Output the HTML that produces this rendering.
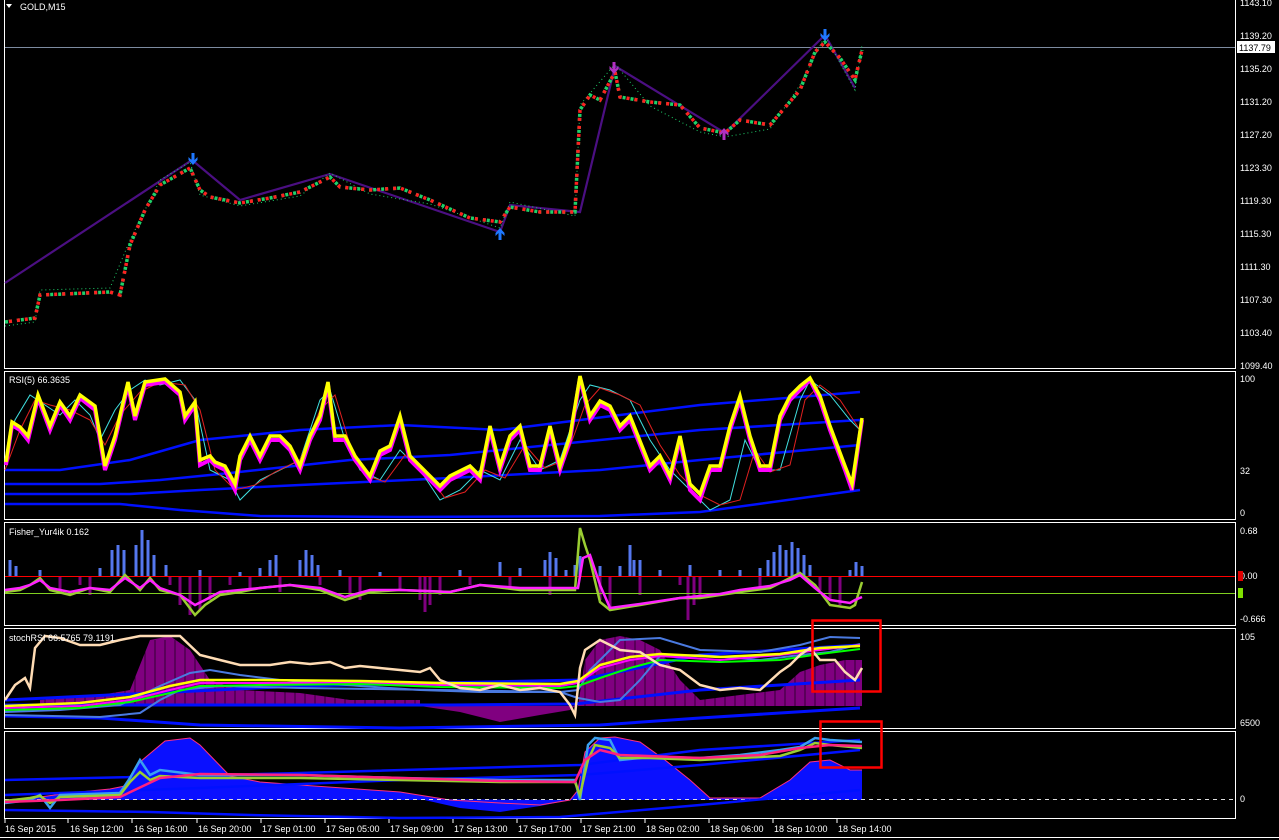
<!DOCTYPE html>
<html><head><meta charset="utf-8"><style>
html,body{margin:0;padding:0;background:#000;}
svg{display:block;font-family:"Liberation Sans",sans-serif;}
</style></head><body>
<svg width="1279" height="840" viewBox="0 0 1279 840" xmlns="http://www.w3.org/2000/svg">
<defs>
<path id="dn" d="M-1.5,-12 h3 v7 l3,-3 v3 l-4.5,5 l-4.5,-5 v-3 l3,3 z"/>
</defs>
<rect width="1279" height="840" fill="#000"/>
<!-- frames -->
<g fill="none" stroke="#fff" stroke-width="1">
<rect x="4.5" y="-1" width="1231" height="369.5"/>
<rect x="4.5" y="371.5" width="1231" height="148"/>
<rect x="4.5" y="522.5" width="1231" height="103"/>
<rect x="4.5" y="628.5" width="1231" height="100"/>
<rect x="4.5" y="731.5" width="1231" height="87"/>
</g>
<!-- main chart -->
<text x="20" y="10" fill="#fff" font-size="9">GOLD,M15</text>
<path d="M6 4 L12 4 L9 8 Z" fill="#fff"/>
<line x1="5" y1="47.5" x2="1235" y2="47.5" stroke="#7d8ba0"/>
<polyline fill="none" stroke="#4b0f82" stroke-width="2.2" points="5,283 192,160 240,200 330,174 500,232 510,205 580,212 615,66 725,133 825,35 855,88"/>
<polyline fill="none" stroke="#1fd16a" stroke-width="1" points="5,326 35,322 40,290 110,288 130,240 160,180 190,162 200,195 240,206 300,196 330,173 370,194 430,204 500,228 510,202 575,216 580,105 615,64 650,106 700,132 725,137 770,129 800,85 825,36 855,90 862,45" stroke-dasharray="1 3"/>
<polyline fill="none" stroke="#1fd16a" stroke-width="3.5" stroke-dasharray="3 1 3 5" points="5,322 35,318 40,295 110,292 120,295 130,245 145,210 160,185 190,168 200,190 210,197 240,203 270,198 300,192 330,177 340,187 370,190 400,188 430,200 470,218 500,222 510,207 540,212 575,212 580,110 590,95 600,100 615,72 620,97 650,102 680,105 700,128 725,133 740,120 770,125 800,90 815,52 825,42 840,58 855,80 862,50"/>
<polyline fill="none" stroke="#ff2020" stroke-width="3.5" stroke-dasharray="3 5" stroke-dashoffset="-4" points="5,322 35,318 40,295 110,292 120,295 130,245 145,210 160,185 190,168 200,190 210,197 240,203 270,198 300,192 330,177 340,187 370,190 400,188 430,200 470,218 500,222 510,207 540,212 575,212 580,110 590,95 600,100 615,72 620,97 650,102 680,105 700,128 725,133 740,120 770,125 800,90 815,52 825,42 840,58 855,80 862,50"/>
<use href="#dn" x="193" y="165" fill="#1e78ff"/>
<use href="#dn" transform="translate(500,228) rotate(180)" fill="#1e78ff"/>
<use href="#dn" x="614" y="74" fill="#b030c0"/>
<use href="#dn" transform="translate(724,128) rotate(180)" fill="#b030c0"/>
<use href="#dn" x="825" y="41" fill="#1e78ff"/>
<g fill="#fff" font-size="9">
<text x="1240" y="6">1143.10</text><text x="1240" y="39">1139.20</text>
<text x="1240" y="72">1135.20</text><text x="1240" y="105">1131.20</text>
<text x="1240" y="138">1127.20</text><text x="1240" y="171">1123.30</text>
<text x="1240" y="204">1119.30</text><text x="1240" y="237">1115.30</text>
<text x="1240" y="270">1111.30</text><text x="1240" y="303">1107.30</text>
<text x="1240" y="336">1103.40</text><text x="1240" y="369">1099.40</text>
</g>
<rect x="1237" y="41" width="38" height="12" fill="#fff"/>
<text x="1239" y="51" fill="#000" font-size="9">1137.79</text>
<!-- RSI -->
<text x="9" y="383" fill="#fff" font-size="9">RSI(5) 66.3635</text>
<g fill="#fff" font-size="9"><text x="1240" y="382">100</text><text x="1240" y="474">32</text><text x="1240" y="516">0</text></g>
<g fill="none" stroke="#0010ff" stroke-width="2.5">
<polyline points="5,484 100,484 160,480 230,473 350,460 450,455 600,440 700,430 860,420"/>
<polyline points="5,494 130,494 200,490 300,485 450,478 600,470 700,460 860,445"/>
<polyline points="5,504 120,504 180,510 260,516 400,517 600,516 700,512 860,490"/>
<polyline points="5,470 60,470 130,460 200,440 300,430 400,425 500,430 580,420 700,405 860,392"/>
</g>
<polyline fill="none" stroke="#40e0e0" stroke-width="1" points="5,460 15,420 30,395 45,405 60,415 75,400 90,415 100,440 115,410 130,390 145,380 160,385 180,380 195,400 210,470 230,480 240,500 260,480 280,470 300,460 320,400 330,390 345,440 360,470 380,480 400,450 420,470 440,500 460,490 480,470 500,480 520,440 540,470 560,460 580,400 590,385 610,390 630,400 650,440 670,470 690,490 710,510 730,500 745,440 760,470 780,470 800,400 810,380 830,395 850,420 860,430"/>
<polyline fill="none" stroke="#e02020" stroke-width="1" points="5,470 20,430 35,400 50,405 70,410 90,420 105,445 120,415 140,392 160,382 185,385 200,410 215,470 235,490 255,485 275,472 300,460 320,410 335,395 350,445 365,475 385,482 405,455 425,472 445,498 465,492 485,470 505,478 525,445 545,468 565,460 585,405 600,388 620,395 640,405 660,445 680,475 700,495 720,505 740,500 755,450 770,472 790,465 805,400 820,385 840,400 860,430"/>
<polyline fill="none" stroke="#ff00ff" stroke-width="4" points="6,465 12,425 20,430 28,440 38,398 50,430 60,405 70,420 80,398 95,410 105,470 115,440 128,385 135,420 145,385 165,382 180,395 185,420 195,405 200,465 210,460 215,465 225,470 235,490 240,460 250,440 260,460 270,440 280,440 290,450 300,470 310,440 320,420 328,385 335,440 345,440 355,460 370,480 380,455 390,450 400,420 410,460 420,470 430,480 440,490 450,480 470,470 480,480 490,430 500,470 510,440 520,430 530,470 540,470 550,430 560,470 570,440 580,378 590,420 600,405 610,410 620,430 630,420 650,470 660,460 670,480 680,440 690,490 700,500 710,470 720,470 730,430 740,400 750,440 760,470 770,470 780,420 790,400 800,390 810,380 820,400 830,430 845,470 852,490 862,420"/>
<polyline fill="none" stroke="#ffff00" stroke-width="3.5" points="6,462 12,422 20,427 28,436 38,395 50,426 60,402 70,416 80,395 95,406 105,466 115,436 128,382 135,416 145,382 165,379 180,392 185,416 195,402 200,460 210,456 215,462 225,466 235,484 240,456 250,436 260,456 270,436 280,436 290,446 300,466 310,436 320,416 328,382 335,436 345,436 355,456 370,476 380,451 390,446 400,416 410,456 420,466 430,476 440,486 450,476 470,466 480,476 490,426 500,466 510,436 520,426 530,466 540,466 550,426 560,466 570,436 580,376 590,416 600,401 610,406 620,426 630,416 650,466 660,456 670,476 680,436 690,484 700,494 710,466 720,466 730,426 740,396 750,436 760,466 770,466 780,416 790,396 800,386 810,378 820,396 830,426 845,466 852,484 862,418"/>
<!-- Fisher -->
<text x="9" y="535" fill="#fff" font-size="9">Fisher_Yur4ik 0.162</text>
<g fill="#fff" font-size="9"><text x="1240" y="534">0.68</text><text x="1240" y="579">0.00</text><text x="1240" y="622">-0.666</text></g>
<rect x="1238" y="571" width="5" height="10" fill="#e00000"/><rect x="1238" y="588" width="5" height="10" fill="#80e000"/>
<g stroke="#5577ee" stroke-width="3">
<path d="M10 576V560M16 576V566M40 576V570M100 576V568M112 576V550M118 576V545M124 576V550M136 576V545M142 576V530M148 576V540M154 576V555M166 576V565M200 576V570M240 576V572M260 576V568M270 576V560M276 576V555M300 576V560M306 576V550M312 576V555M318 576V565M340 576V570M380 576V572M460 576V570M500 576V562M520 576V568M545 576V560M550 576V552M556 576V558M566 576V570M575 576V565M580 576V556M600 576V566M620 576V566M630 576V545M634 576V560M640 576V560M660 576V570M690 576V565M720 576V570M740 576V570M760 576V568M768 576V560M774 576V552M780 576V545M786 576V550M792 576V542M798 576V548M804 576V555M810 576V565M850 576V570M856 576V562M862 576V566"/>
</g>
<g stroke="#800080" stroke-width="3">
<path d="M60 576V590M80 576V585M90 576V595M170 576V585M180 576V605M190 576V615M200 576V610M210 576V600M230 576V585M250 576V590M280 576V592M320 576V585M350 576V595M360 576V600M400 576V590M420 576V600M425 576V612M430 576V605M440 576V595M470 576V585M510 576V590M550 576V595M600 576V600M610 576V608M640 576V595M680 576V585M688 576V620M694 576V605M700 576V595M760 576V590M820 576V590M830 576V600M840 576V605"/>
</g>
<line x1="5" y1="576.5" x2="1235" y2="576.5" stroke="#ff0000"/>
<line x1="5" y1="593.5" x2="1235" y2="593.5" stroke="#80d020"/>
<polyline fill="none" stroke="#9acd32" stroke-width="2.5" points="5,592 20,590 30,585 40,578 50,590 70,595 90,588 110,592 125,575 140,590 150,578 160,590 180,595 195,615 205,605 220,595 240,592 260,588 290,585 320,590 345,600 370,592 400,590 450,592 480,585 520,590 560,590 575,590 580,528 585,545 590,560 600,602 610,610 640,605 680,598 700,598 720,595 740,592 770,588 790,578 800,573 815,585 830,605 850,608 855,605 862,582"/>
<polyline fill="none" stroke="#ff22ff" stroke-width="2.5" points="5,590 20,588 30,585 40,580 50,588 70,592 90,588 110,590 125,578 140,588 150,580 160,588 180,595 195,605 205,600 220,592 240,590 260,588 290,585 320,588 345,597 370,590 400,590 450,592 480,585 520,588 560,588 578,588 583,558 590,555 600,585 610,608 640,604 680,598 700,596 720,594 740,590 770,586 790,580 800,575 815,588 830,600 850,603 855,600 862,597"/>
<!-- stochRSI -->
<g fill="#800080">
<path d="M40,706 L40,700 100,695 130,690 150,640 170,636 190,650 210,680 240,690 300,693 350,700 420,700 420,706 Z"/>
<path d="M420,706 L460,712 500,722 540,715 570,710 575,706 Z"/>
<path d="M578,706 L585,660 600,640 620,636 640,640 660,650 680,680 700,700 740,695 780,690 800,672 820,665 845,660 862,660 862,706 Z"/>
</g>
<g stroke="#000" stroke-width="1" opacity="0.6"><path d="M45 640V706M55 640V706M65 640V706M75 640V706M85 640V706M95 640V706M105 640V706M115 640V706M125 640V706M135 640V706M145 640V706M155 640V706M165 640V706M175 640V706M185 640V706M195 640V706M205 640V706M215 640V706M225 640V706M235 640V706M245 640V706M255 640V706M265 640V706M275 640V706M285 640V706M295 640V706M305 640V706M315 640V706M325 640V706M335 640V706M345 640V706M355 640V706M365 640V706M375 640V706M385 640V706M395 640V706M405 640V706M415 640V706M585 636V706M595 636V706M605 636V706M615 636V706M625 636V706M635 636V706M645 636V706M655 636V706M665 636V706M675 636V706M685 636V706M695 636V706M705 636V706M715 636V706M725 636V706M735 636V706M745 636V706M755 636V706M765 636V706M775 636V706M785 636V706M795 636V706M805 636V706M815 636V706M825 636V706M835 636V706M845 636V706M855 636V706"/></g>
<g fill="none" stroke="#0010ff" stroke-width="3">
<polyline points="5,705 200,705 450,705 575,704 700,690 860,680"/>
<polyline points="5,716 100,718 200,725 400,728 600,725 700,718 860,708"/>
<polyline points="5,700 300,686 580,680 700,655 860,645"/>
</g>
<polyline fill="none" stroke="#4a7ae0" stroke-width="2" points="5,712 60,710 120,705 160,686 190,673 210,670 240,675 280,680 360,686 420,690 480,692 560,692 578,690 590,670 620,640 660,638 700,650 760,652 800,645 830,637 860,638"/>
<polyline fill="none" stroke="#4a7ae0" stroke-width="2" points="5,715 100,717 140,713 160,700 180,690 220,686 300,688 440,690 560,692 578,698 600,702 620,700 640,680 660,656 700,655 760,660 800,655 830,652 860,644"/>
<polyline fill="none" stroke="#ff00ff" stroke-width="2" points="5,708 80,706 130,700 170,690 200,683 260,683 360,683 440,685 560,686 578,683 600,668 630,660 660,656 720,660 780,655 820,650 860,645"/>
<polyline fill="none" stroke="#ffff00" stroke-width="2.5" points="5,706 80,703 130,697 170,686 200,680 260,680 360,681 440,683 560,684 578,681 600,665 630,657 660,654 720,657 780,654 820,648 860,646"/>
<polyline fill="none" stroke="#00ff00" stroke-width="2" points="5,710 80,708 130,702 170,693 200,686 260,685 360,684 440,687 560,688 578,686 600,678 630,668 660,660 720,662 780,660 820,654 860,649"/>
<polyline fill="none" stroke="#ffdcb4" stroke-width="2.5" points="5,700 15,685 25,678 30,688 35,648 45,636 60,638 80,645 100,645 120,640 140,636 180,636 200,655 220,660 240,665 270,665 290,662 310,664 330,662 345,668 360,666 380,668 400,670 420,672 430,668 440,680 460,688 480,690 500,685 520,690 540,688 560,692 570,705 575,715 580,668 585,650 600,640 620,650 640,652 660,665 680,670 700,685 720,690 740,688 760,690 780,672 790,665 800,655 810,648 820,660 835,660 845,672 855,680 862,668"/>
<text x="9" y="641" fill="#fff" font-size="9">stochRSI 66.5765 79.1191</text>
<g fill="#fff" font-size="9"><text x="1240" y="640">105</text><text x="1240" y="726">6500</text></g>
<rect x="812.5" y="620.5" width="68" height="71" fill="none" stroke="#ff0000" stroke-width="2.5"/>
<!-- last panel -->
<path d="M5,800 L40,797 70,793 110,789 125,786 140,762 165,741 190,738 200,745 230,776 260,782 300,785 400,792 450,800 500,803 540,805 570,800 578,790 585,752 600,738 615,737 640,742 665,760 690,780 710,798 760,798 790,780 810,762 830,760 850,770 862,770 862,800 Z" fill="#0a10ff"/>
<path d="M420,799 L460,808 500,812 540,806 570,800 Z" fill="#0a10ff"/>
<polyline fill="none" stroke="#ff3080" stroke-width="1" points="5,800 40,797 70,793 110,789 125,786 140,762 165,741 190,738 200,745 230,776 260,782 300,785 400,792 450,800 500,803 540,805 570,800 578,790 585,752 600,738 615,737 640,742 665,760 690,780 710,798 760,798 790,780 810,762 830,760 850,770 862,770"/>
<line x1="5" y1="799.5" x2="1235" y2="799.5" stroke="#ddd" stroke-dasharray="4 4"/>
<g fill="none" stroke="#0010ff" stroke-width="2.5">
<polyline points="5,795 200,788 400,780 580,775 700,765 860,750"/>
<polyline points="5,810 150,812 250,815 400,818 560,817 700,805 860,790"/>
<polyline points="5,780 300,773 580,765 700,750 860,740"/>
</g>
<polyline fill="none" stroke="#3aa0f0" stroke-width="2.5" points="5,803 30,800 40,795 50,808 60,795 120,793 130,778 140,760 150,775 160,770 200,775 300,775 400,778 500,780 575,780 580,800 588,745 595,738 610,740 620,760 650,757 700,758 740,755 780,750 800,747 815,738 830,740 862,742"/>
<polyline fill="none" stroke="#9acd32" stroke-width="2.5" points="5,801 30,798 40,796 50,803 60,797 120,795 130,782 140,772 150,780 160,776 200,778 300,778 400,780 500,782 575,782 580,795 588,760 595,745 610,748 620,758 650,758 700,760 740,758 780,756 800,750 815,743 830,745 862,748"/>
<polyline fill="none" stroke="#ff2080" stroke-width="2.5" points="5,802 60,800 120,797 160,778 200,774 300,775 400,778 500,781 575,782 585,760 600,750 620,755 700,758 760,755 800,748 830,745 862,746"/>
<text x="1240" y="802" fill="#fff" font-size="9">0</text>
<rect x="820.5" y="721.5" width="61" height="46" fill="none" stroke="#ff0000" stroke-width="2.5"/>
<!-- time axis -->
<g stroke="#fff"><path d="M5 819v4M68 819v4M132 819v4M197 819v4M261 819v4M325 819v4M389 819v4M453 819v4M517 819v4M581 819v4M645 819v4M709 819v4M773 819v4M837 819v4"/></g>
<g fill="#fff" font-size="9">
<text x="5" y="832">16 Sep 2015</text><text x="70" y="832">16 Sep 12:00</text>
<text x="134" y="832">16 Sep 16:00</text><text x="198" y="832">16 Sep 20:00</text>
<text x="262" y="832">17 Sep 01:00</text><text x="326" y="832">17 Sep 05:00</text>
<text x="390" y="832">17 Sep 09:00</text><text x="454" y="832">17 Sep 13:00</text>
<text x="518" y="832">17 Sep 17:00</text><text x="582" y="832">17 Sep 21:00</text>
<text x="646" y="832">18 Sep 02:00</text><text x="710" y="832">18 Sep 06:00</text>
<text x="774" y="832">18 Sep 10:00</text><text x="838" y="832">18 Sep 14:00</text>
</g>
<line x1="0" y1="837.5" x2="1279" y2="837.5" stroke="#fff"/>
</svg>
</body></html>
